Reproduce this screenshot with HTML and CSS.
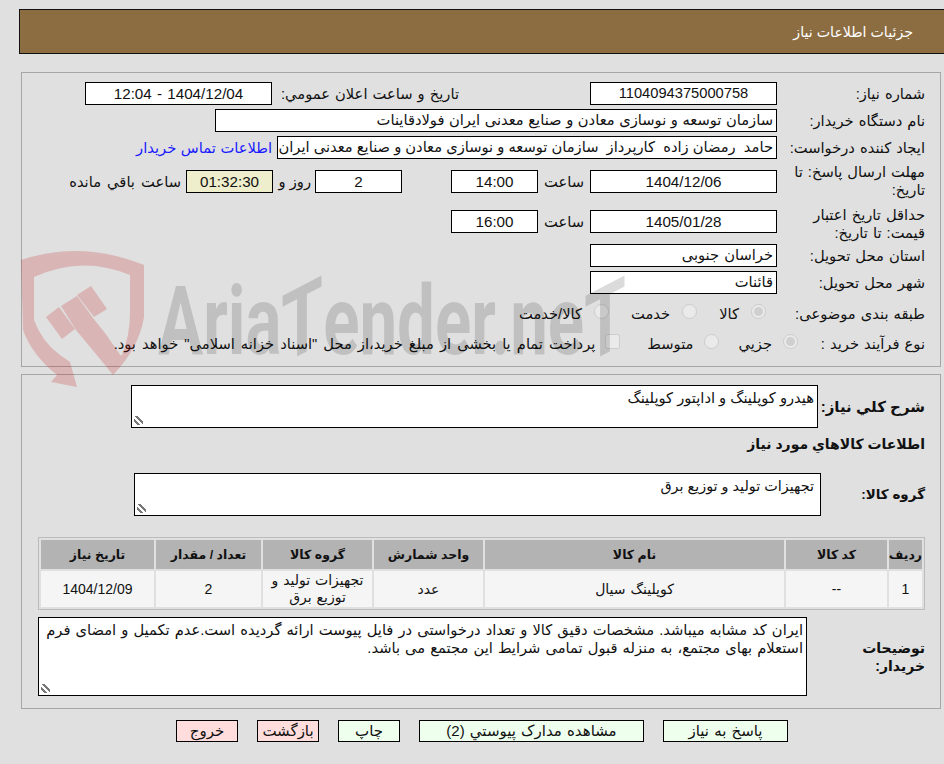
FILE: index.html
```html
<!DOCTYPE html>
<html lang="fa">
<head>
<meta charset="utf-8">
<title>جزئیات اطلاعات نیاز</title>
<link rel="stylesheet" href="styles.css">
</head>
<body>
<div class="page" dir="rtl">
  <div class="watermark" aria-hidden="true">
    <svg class="shield" viewBox="0 0 130 140" width="130" height="140">
      <g class="shield-shape">
        <path d="M1 10 Q62 -10 124 15 V67 Q119 98 93 125 L85 115 L102 105 Q110 85 110 63 V25 Q62 5 14 27 V70 Q22 92 40 105 L50 112 L57 137 L31 132 L37 125 Q12 105 3 80 Z"/>
        <path d="M26 67 L39 57 L55 79 L42 89 Z"/>
        <path d="M41 56 L57 46 L73 68 L85 83 L101 106 L85 115 L56 80 Z"/>
        <path d="M57 45 L71 36 L87 59 L74 67 Z"/>
      </g>
    </svg>
    <div class="wm-text">Aria<span class="wm-t">T</span>ender.ne<span class="wm-t">T</span></div>
  </div>

  <header class="title-bar">جزئیات اطلاعات نیاز</header>

  <section class="panel panel-top">
    <div class="row">
      <label class="lbl">شماره نیاز:</label>
      <div class="field ctr ctr-long w187">1104094375000758</div>
      <span class="lbl-pub">تاریخ و ساعت اعلان عمومي:</span>
      <div class="field ctr w187">1404/12/04 - 12:04</div>
    </div>
    <div class="row">
      <label class="lbl">نام دستگاه خریدار:</label>
      <div class="field w562">سازمان توسعه و نوسازی معادن و صنایع معدنی ایران فولادقاینات</div>
    </div>
    <div class="row">
      <label class="lbl">ایجاد کننده درخواست:</label>
      <div class="field w500">حامد&nbsp; رمضان زاده&nbsp; کارپرداز&nbsp; سازمان توسعه و نوسازی معادن و صنایع معدنی ایران</div>
      <a class="contact" href="#">اطلاعات تماس خریدار</a>
    </div>
    <div class="row row-tall first-tall">
      <label class="lbl">مهلت ارسال پاسخ: تا<br>تاریخ:</label>
      <div class="field ctr w187">1404/12/06</div>
      <span class="word w52">ساعت</span>
      <div class="field ctr w87">14:00</div>
      <div class="field ctr w87 ml-day">2</div>
      <span class="word w34">روز و</span>
      <div class="field ctr w87 timer">01:32:30</div>
      <span class="word remain">ساعت باقي مانده</span>
    </div>
    <div class="row row-tall second-tall">
      <label class="lbl">حداقل تاریخ اعتبار<br>قیمت: تا تاریخ:</label>
      <div class="field ctr w187">1405/01/28</div>
      <span class="word w52">ساعت</span>
      <div class="field ctr w87">16:00</div>
    </div>
    <div class="row">
      <label class="lbl">استان محل تحویل:</label>
      <div class="field w187">خراسان جنوبی</div>
    </div>
    <div class="row">
      <label class="lbl">شهر محل تحویل:</label>
      <div class="field w187">قائنات</div>
    </div>
    <div class="row row-opt">
      <label class="lbl">طبقه بندی موضوعی:</label>
      <span class="opts opts-a">
        <span class="opt"><input type="radio" name="a" checked disabled>کالا</span>
        <span class="opt"><input type="radio" name="a" disabled>خدمت</span>
        <span class="opt"><input type="radio" name="a" disabled>کالا/خدمت</span>
      </span>
    </div>
    <div class="row row-opt">
      <label class="lbl lbl-short">نوع فرآیند خرید :</label>
      <span class="opts opts-b">
        <span class="opt"><input type="radio" name="b" checked disabled>جزیي</span>
        <span class="opt"><input type="radio" name="b" disabled>متوسط</span>
        <span class="opt o-pay"><input class="chk" type="checkbox" disabled>پرداخت تمام یا بخشی از مبلغ خرید،از محل "اسناد خزانه اسلامی" خواهد بود.</span>
      </span>
    </div>
  </section>

  <section class="panel panel-bottom">
    <div class="row-b r-desc">
      <label class="lbl-b lbl-desc">شرح کلي نیاز:</label>
      <textarea class="box box-desc" readonly>هیدرو کوپلینگ و اداپتور کوپلینگ</textarea>
    </div>
    <h2 class="sub">اطلاعات کالاهاي مورد نیاز</h2>
    <div class="row-b r-group">
      <label class="lbl-b lbl-group">گروه کالا:</label>
      <textarea class="box box-group" readonly>تجهیزات تولید و توزیع برق</textarea>
    </div>
    <table class="items">
      <colgroup>
        <col class="c1"><col class="c2"><col class="c3"><col class="c4"><col class="c5"><col class="c6"><col class="c7">
      </colgroup>
      <thead>
        <tr><th>ردیف</th><th>کد کالا</th><th>نام کالا</th><th>واحد شمارش</th><th>گروه کالا</th><th>تعداد / مقدار</th><th>تاریخ نیاز</th></tr>
      </thead>
      <tbody>
        <tr><td>1</td><td>--</td><td>کوپلینگ سیال</td><td>عدد</td><td>تجهیزات تولید و توزیع برق</td><td>2</td><td>1404/12/09</td></tr>
      </tbody>
    </table>
    <div class="row-b r-notes">
      <label class="lbl-b lbl-notes">توضیحات خریدار:</label>
      <textarea class="box box-notes" readonly>ایران کد مشابه میباشد. مشخصات دقیق کالا و تعداد درخواستی در فایل پیوست ارائه گردیده است.عدم تکمیل و امضای فرم استعلام بهای مجتمع، به منزله قبول تمامی شرایط این مجتمع می باشد.</textarea>
    </div>
  </section>

  <div class="actions">
    <button class="btn green b-answer" type="button">پاسخ به نیاز</button>
    <button class="btn green b-docs" type="button">مشاهده مدارک پیوستي (2)</button>
    <button class="btn green b-small" type="button">چاپ</button>
    <button class="btn pink b-small" type="button">بازگشت</button>
    <button class="btn pink b-small" type="button">خروج</button>
  </div>
</div>
</body>
</html>
```

FILE: styles.css
```css
* { box-sizing: border-box; }
html, body { margin: 0; padding: 0; }
body {
  background: #e0e0e0;
  color: #111;
  font-family: "Liberation Sans", "DejaVu Sans", sans-serif;
  font-size: 14.7px;
  word-spacing: 1px;
  overflow: hidden;
}
.page {
  position: relative;
  width: 944px;
  height: 764px;
  padding-top: 9px;
  overflow: hidden;
}
.watermark {
  position: absolute;
  left: 20px;
  top: 250px;
  width: 620px;
  height: 140px;
  z-index: 2;
  pointer-events: none;
  direction: ltr;
}
.shield { position: absolute; left: 0; top: 0; }
.shield-shape { fill: rgb(192, 3, 3); opacity: .19; }
.wm-text {
  position: absolute;
  left: 138px;
  top: 21px;
  font-family: "Roboto", sans-serif;
  font-size: 96px;
  line-height: 100px;
  font-weight: 700;
  color: rgba(0, 0, 0, .14);
  white-space: nowrap;
  word-spacing: 0;
  transform: scaleX(.7);
  transform-origin: left center;
}
.wm-t { display: inline-block; transform: skewY(-20deg); }
.title-bar {
  position: relative;
  margin-left: 19px;
  height: 45px;
  background: #8c6d42;
  border: 1px solid #111;
  border-right: 0;
  color: #fff;
  font-size: 14.2px;
  word-spacing: 0;
  line-height: 44px;
  padding-right: 31px;
}
.panel {
  position: relative;
  z-index: 1;
  margin-left: 21px;
  margin-right: 3px;
  border: 1px solid #a6a6a6;
}
.panel-top { margin-top: 18px; height: 295px; padding: 9px 15px 0 0; }
.panel-bottom { margin-top: 7px; height: 335px; padding: 10px 15px 0 0; }
.row {
  display: flex;
  align-items: center;
  height: 23px;
  margin-bottom: 4px;
}
.row-tall { height: 36px; }
.first-tall .lbl, .second-tall .lbl { line-height: 18px; }
.second-tall { height: 35px; margin-top: 5px; margin-bottom: 5px; }
.second-tall .lbl { padding-top: 5px; }
.row-opt { height: 30px; margin: 0; }
.lbl { flex: 0 0 148px; white-space: nowrap; }
.lbl-short { flex-basis: 115px; }
.field {
  height: 23px;
  line-height: 21px;
  background: #fff;
  border: 1px solid #000;
  padding: 0 3px;
  white-space: nowrap;
  overflow: hidden;
}
.ctr { text-align: center; font-size: 15.2px; }
.ctr-long { font-size: 14.7px; }
.w187 { flex: 0 0 187px; }
.w87 { flex: 0 0 87px; }
.w562 { flex: 0 0 562px; word-spacing: .5px; }
.w500 { flex: 0 0 500px; word-spacing: 0; }
.word { white-space: nowrap; }
.w52 { flex: 0 0 52px; text-align: center; }
.w34 { flex: 0 0 42px; padding-right: 4px; white-space: nowrap; word-spacing: 0; }
.ml-day { margin-right: 49px; }
.timer { background: #eeeecc; }
.remain { margin-right: 5px; word-spacing: 2px; }
.lbl-pub { margin-right: 131px; margin-left: 5px; white-space: nowrap; width: 182px; }
.contact { color: #1a1aff; text-decoration: none; margin-right: 5px; white-space: nowrap; word-spacing: .5px; }
.opts { display: flex; align-items: center; word-spacing: 2px; }
.opt { display: inline-flex; align-items: center; white-space: nowrap; gap: 11px; }
.opt input { width: 15px; height: 15px; margin: 0 0 3px 0; opacity: .75; }
.opts-a { margin-right: 11px; }
.opts-a .opt { gap: 12px; }
.opts-a .opt + .opt { margin-right: 22px; }
.opts-b { margin-right: 12px; }
.opts-b .opt + .opt { margin-right: 19px; }
.opts-b .opt.o-pay { margin-right: 27px; gap: 10px; }
.chk { width: 16px; height: 16px; }
.row-b { display: flex; align-items: center; }
.lbl-b { font-weight: 700; font-size: 14px; flex: 0 0 107px; line-height: 18px; word-spacing: 0; }
.lbl-desc { font-size: 15px; white-space: nowrap; }
.box {
  display: block;
  background: #fff;
  border: 1px solid #000;
  border-radius: 0;
  color: #111;
  font-family: inherit;
  font-size: 14.7px;
  line-height: 18px;
  padding: 3px 3px;
  margin: 0;
  outline: 0;
}
.box::-webkit-resizer {
  background: linear-gradient(45deg, transparent 20%, #777 20%, #777 34%, transparent 34%, transparent 54%, #777 54%, #777 68%, transparent 68%) no-repeat left 2px bottom 2px / 9px 9px;
}
.box-desc { width: 687px; height: 43px; }
.sub { font-size: 14px; font-weight: 700; margin: 7px 0 0; line-height: 18px; height: 18px; word-spacing: 0; }
.r-group { margin-top: 20px; }
.lbl-group { flex-basis: 104px; font-size: 13.5px; }
.box-group { width: 687px; height: 43px; padding-right: 6px; font-size: 14.4px; }
.items {
  margin-top: 21px;
  width: 887px;
  border-collapse: separate;
  border-spacing: 2px;
  border: 1px solid #bcbcbc;
  table-layout: fixed;
  font-size: 14px;
}
.c1 { width: 33px; } .c2 { width: 101px; } .c3 { width: 299px; } .c4 { width: 109px; }
.c5 { width: 109px; } .c6 { width: 105px; } .c7 { width: 113px; }
.items th { background: #b3b3b3; height: 29px; padding: 0; font-size: 12.5px; font-weight: 700; color: #111; white-space: nowrap; word-spacing: 0; }
.items td { background: #f5f5f5; height: 36px; padding: 0 6px; text-align: center; line-height: 17px; }
.r-notes { margin-top: 7px; }
.lbl-notes { flex: 0 0 118px; padding-left: 30px; }
.box-notes { width: 769px; height: 79px; word-spacing: 1px; }
.actions {
  position: relative;
  z-index: 1;
  display: flex;
  gap: 19px;
  margin-top: 11px;
  padding-right: 156px;
}
.btn {
  height: 22px;
  border: 1px solid #000;
  border-radius: 0;
  padding: 0;
  margin: 0;
  color: #111;
  font-family: inherit;
  font-size: 15px;
  word-spacing: 1px;
  line-height: 20px;
}
.green { background: #eeffee; }
.pink { background: #ffdddd; }
.b-answer { width: 125px; }
.b-docs { width: 225px; }
.b-small { width: 62px; }
```
